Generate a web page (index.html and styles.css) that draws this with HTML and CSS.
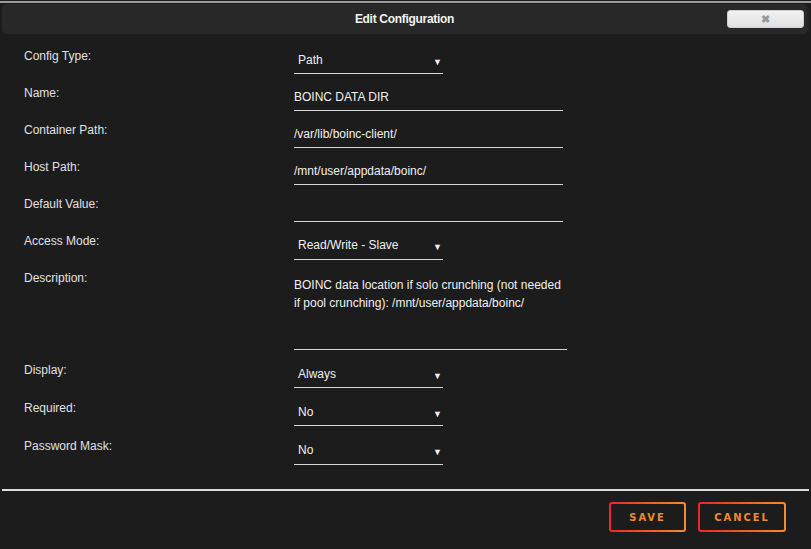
FILE: index.html
```html
<!DOCTYPE html>
<html lang="en">
<head>
  <meta charset="UTF-8">
  <title>Edit Configuration</title>
  <link rel="stylesheet" href="styles.css">
</head>
<body>

<div class="dialog">
  <div class="titlebar">
    <span class="title">Edit Configuration</span>
    <button class="close">&#10006;</button>
  </div>

  <div class="form">
    <div class="row">
      <label>Config Type:</label>
      <div class="select">Path <span class="arrow">&#9660;</span></div>
    </div>
    <div class="row">
      <label>Name:</label>
      <div class="input">BOINC DATA DIR</div>
    </div>
    <div class="row">
      <label>Container Path:</label>
      <div class="input">/var/lib/boinc-client/</div>
    </div>
    <div class="row">
      <label>Host Path:</label>
      <div class="input">/mnt/user/appdata/boinc/</div>
    </div>
    <div class="row">
      <label>Default Value:</label>
      <div class="input"></div>
    </div>
    <div class="row">
      <label>Access Mode:</label>
      <div class="select">Read/Write - Slave <span class="arrow">&#9660;</span></div>
    </div>
    <div class="row row-desc">
      <label>Description:</label>
      <div class="textarea">BOINC data location if solo crunching (not needed<br>if pool crunching): /mnt/user/appdata/boinc/</div>
    </div>
    <div class="row row-tall">
      <label>Display:</label>
      <div class="select">Always <span class="arrow">&#9660;</span></div>
    </div>
    <div class="row row-tall">
      <label>Required:</label>
      <div class="select">No <span class="arrow">&#9660;</span></div>
    </div>
    <div class="row row-tall">
      <label>Password Mask:</label>
      <div class="select">No <span class="arrow">&#9660;</span></div>
    </div>
  </div>

  <div class="footer">
    <button class="btn">Save</button>
    <button class="btn">Cancel</button>
  </div>
</div>

</body>
</html>
```

FILE: styles.css
```css
* { box-sizing: border-box; margin: 0; padding: 0; }
body {
  font-family: 'Liberation Sans', Arial, sans-serif;
  font-size: 12px;
  background: #1c1c1c;
  color: #dedede;
  height: 549px;
  overflow: hidden;
}

.dialog {
  border-top: 2px solid #9a9a9a;
  margin-top: 1px;
  padding: 1px 2px 0;
}

.titlebar {
  position: relative;
  height: 30px;
  background: #282828;
  border-radius: 5px;
  display: flex;
  align-items: center;
  justify-content: center;
  border-right: 2px solid #232323;
}

.title {
  font-weight: bold;
  font-size: 12px;
  color: #f2f2f2;
  letter-spacing: -0.3px;
}

.close {
  position: absolute;
  right: 3px;
  top: 6px;
  width: 77px;
  height: 18px;
  border: 1px solid #cfcfcf;
  border-radius: 3px;
  background: linear-gradient(#f2f2f2, #e0e0e0);
  color: #9a9a9a;
  font-size: 11px;
  font-weight: bold;
  line-height: 16px;
}

.form {
  padding: 8px 0 0 22px;
}

.row {
  display: flex;
  height: 37px;
}

.row-tall {
  height: 38px;
}

.row label {
  width: 270px;
  padding-top: 6px;
  line-height: 16px;
  color: #e0e0e0;
}

.input, .select, .textarea {
  height: 32px;
  border-bottom: 1px solid #d6d6d6;
  padding-top: 10px;
  line-height: 16px;
  color: #f0f0f0;
}

.input {
  width: 269px;
}

.select {
  position: relative;
  width: 149px;
  padding-left: 4px;
  padding-top: 10px;
}

.row:nth-child(6) .select,
.row:nth-child(10) .select {
  height: 33px;
}

.arrow {
  position: absolute;
  right: 1px;
  top: 12px;
  font-size: 9px;
}

.row-desc {
  height: 92px;
}

.textarea {
  width: 273px;
  height: 86px;
  padding-top: 12px;
  line-height: 18px;
}

.footer {
  margin-top: 19px;
  border-top: 2px solid #dcdcdc;
  display: flex;
  justify-content: flex-end;
  gap: 12px;
  padding: 11px 23px 0 0;
}

.btn {
  width: 77px;
  height: 30px;
  border: 2px solid transparent;
  border-radius: 3px;
  background:
    linear-gradient(#1c1c1c, #1c1c1c) padding-box,
    linear-gradient(90deg, #e22a2a, #f98a2c) border-box;
  color: #f08a2e;
  font-family: 'DejaVu Sans Condensed', 'Liberation Sans', sans-serif;
  font-weight: bold;
  font-size: 11px;
  letter-spacing: 2px;
  text-transform: uppercase;
}

.btn + .btn {
  width: 88px;
}
```
